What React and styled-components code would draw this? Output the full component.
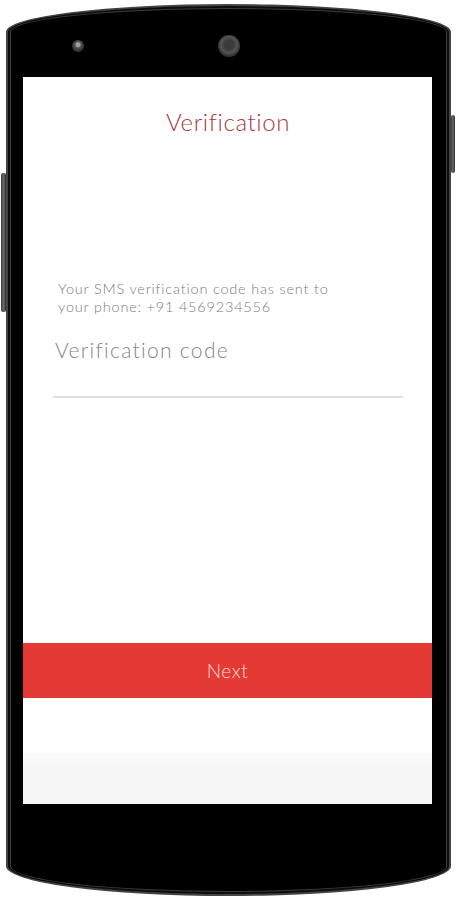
import React from "react";
import styled, { createGlobalStyle } from "styled-components";

const Global = createGlobalStyle`
  html, body { margin: 0; padding: 0; background: #ffffff; }
  body { font-family: "Lato", "Liberation Sans", sans-serif; }
  * { box-sizing: border-box; }
`;

const Stage = styled.div`
  display: flex;
  align-items: flex-start;
  width: 457px;
  height: 900px;
  padding-top: 4px;
`;

const Rail = styled.div`
  width: ${(p) => p.$w}px;
  display: flex;
  flex-direction: column;
  flex-shrink: 0;
`;

const SideButton = styled.div`
  margin-top: ${(p) => p.$top}px;
  margin-left: ${(p) => p.$left || 0}px;
  width: ${(p) => p.$w}px;
  height: ${(p) => p.$h}px;
  background: linear-gradient(90deg, #3c3c3c, #6a6a6a 50%, #2e2e2e);
  border-radius: 2px;
`;

const Phone = styled.div`
  width: 445px;
  height: 892px;
  flex-shrink: 0;
  background: #000;
  border: 2px solid #444;
  border-radius: 50% 50% 50% 50% / 28px 28px 30px 30px;
  box-shadow: inset 0 0 0 2px #0d0d0d, inset 0 0 0 3px #3b3b3b;
  display: flex;
  flex-direction: column;
`;

const TopBezel = styled.div`
  height: 71px;
  padding-top: 8px;
  display: flex;
  align-items: center;
`;

const Sensor = styled.div`
  width: 12px;
  height: 12px;
  margin-left: 64px;
  border-radius: 50%;
  background: radial-gradient(circle at 50% 40%, #a0a0a0 0 2px, #555 3px, #333 6px);
`;

const Camera = styled.div`
  width: 22px;
  height: 22px;
  margin-left: 134px;
  border-radius: 50%;
  background: radial-gradient(circle at 50% 45%, #3c3c3c 0 5px, #555 8px, #333 11px);
`;

const Screen = styled.div`
  margin-left: 15px;
  width: 409px;
  height: 727px;
  background: #ffffff;
  display: flex;
  flex-direction: column;
`;

const Content = styled.div`
  flex: 1;
  display: flex;
  flex-direction: column;
  padding: 30px 29px 0 30px;
`;

const Title = styled.h1`
  margin: 0;
  text-align: center;
  font-family: "Lato", "Liberation Sans", sans-serif;
  font-weight: 300;
  font-size: 24px;
  line-height: 30px;
  color: #a53a44;
  letter-spacing: 0.6px;
`;

const Notice = styled.p`
  margin: 143px 0 0 5px;
  font-size: 14.5px;
  font-weight: 300;
  line-height: 18px;
  color: #7c7c7c;
  letter-spacing: 0.8px;
`;

const Field = styled.div`
  margin-top: 21px;
  height: 61px;
  border-bottom: 2px solid #dedede;
`;

const FieldLabel = styled.div`
  margin-left: 2px;
  font-size: 21px;
  font-weight: 300;
  line-height: 26px;
  color: #858585;
  letter-spacing: 1.3px;
`;

const NextButton = styled.button`
  height: 55px;
  width: 100%;
  border: none;
  background: #e53a33;
  color: #f8dcd8;
  font-family: "Lato", "Liberation Sans", sans-serif;
  font-weight: 300;
  font-size: 19px;
  letter-spacing: 0.6px;
  padding: 0;
`;

const Spacer = styled.div`
  height: 55px;
  background: #ffffff;
`;

const NavBar = styled.div`
  height: 51px;
  background: linear-gradient(#fbfbfb, #f6f6f6 30%);
`;

export default function App() {
  return (
    <>
      <Global />
      <Stage>
        <Rail $w={6}>
          <SideButton $top={169} $left={1} $w={5} $h={139} />
        </Rail>
        <Phone>
          <TopBezel>
            <Sensor />
            <Camera />
          </TopBezel>
          <Screen>
            <Content>
              <Title>Verification</Title>
              <Notice>
                Your SMS verification code has sent to
                <br />
                your phone: +91 4569234556
              </Notice>
              <Field>
                <FieldLabel>Verification code</FieldLabel>
              </Field>
            </Content>
            <NextButton>Next</NextButton>
            <Spacer />
            <NavBar />
          </Screen>
        </Phone>
        <Rail $w={6}>
          <SideButton $top={111} $w={4} $h={58} />
        </Rail>
      </Stage>
    </>
  );
}
